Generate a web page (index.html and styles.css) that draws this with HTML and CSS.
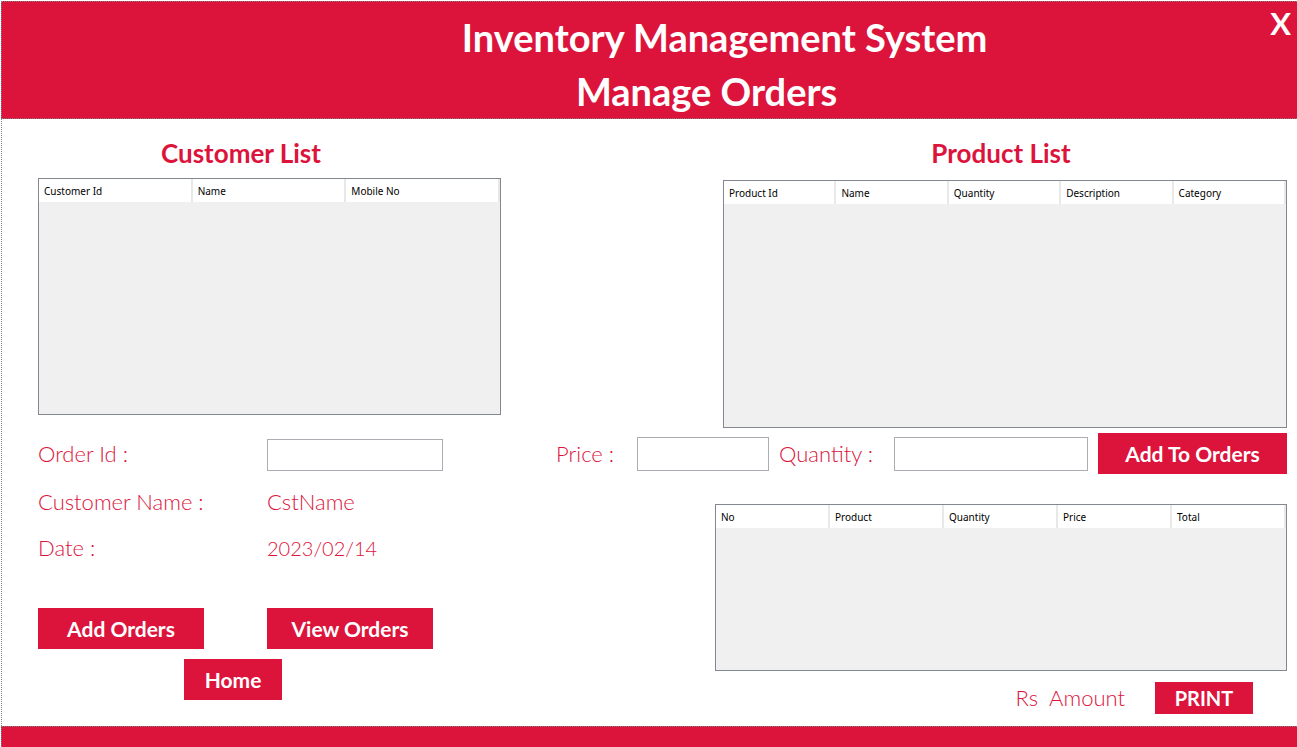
FILE: index.html
```html
<!DOCTYPE html>
<html lang="en">
<head>
<meta charset="utf-8">
<title>Manage Orders</title>
<link rel="stylesheet" href="styles.css">
</head>
<body>
<div class="window">
  <header class="banner">
    <div class="titles">
      <h1 class="title">Inventory Management System</h1>
      <p class="title subtitle">Manage Orders</p>
    </div>
    <button class="close" type="button">X</button>
  </header>
  <main class="content">
    <section class="customers">
      <h2 class="heading customer-heading">Customer List</h2>
      <div class="list customer-list">
        <table class="table">
          <thead><tr><th>Customer Id</th><th>Name</th><th>Mobile No</th></tr></thead>
        </table>
      </div>
      <form class="order-form">
        <label for="order-id">Order Id :</label>
        <input class="field" id="order-id" type="text">
        <span>Customer Name :</span>
        <span>CstName</span>
        <span>Date :</span>
        <span class="date">2023/02/14</span>
      </form>
      <div class="actions">
        <button class="button" type="button">Add Orders</button>
        <button class="button" type="button">View Orders</button>
      </div>
      <button class="button home" type="button">Home</button>
    </section>
    <section class="products">
      <h2 class="heading product-heading">Product List</h2>
      <div class="list product-list">
        <table class="table">
          <thead><tr><th>Product Id</th><th>Name</th><th>Quantity</th><th>Description</th><th>Category</th></tr></thead>
        </table>
      </div>
      <form class="add-form">
        <label class="price-label" for="price">Price :</label>
        <input class="field price" id="price" type="text">
        <label class="quantity-label" for="quantity">Quantity :</label>
        <input class="field quantity" id="quantity" type="text">
        <button class="button add" type="button">Add To Orders</button>
      </form>
      <div class="list order-list">
        <table class="table">
          <thead><tr><th>No</th><th>Product</th><th>Quantity</th><th>Price</th><th>Total</th></tr></thead>
        </table>
      </div>
      <div class="total">
        <span>Rs</span>
        <span>Amount</span>
        <button class="button print" type="button">PRINT</button>
      </div>
    </section>
  </main>
  <footer class="footer"></footer>
</div>
</body>
</html>
```
FILE: styles.css
```css
* {
  box-sizing: border-box;
}

body {
  margin: 0;
  background: #fff;
  color: #dc143c;
  font: 300 22px/30px "Century Gothic", Lato, sans-serif;
}

.window {
  display: flex;
  flex-direction: column;
  min-height: 100vh;
  padding: 1px 0 0 1px;
}

.banner {
  display: flex;
  background: #dc143c;
  border: 1px dotted #808080;
  border-right: 0;
  color: #fff;
  padding-top: 8px;
}

.titles {
  flex: 1;
  padding-left: 177px;
  text-align: center;
}

.title {
  margin: 0;
  font-size: 38px;
  font-weight: 700;
  line-height: 54px;
}

.subtitle {
  padding-right: 36px;
}

.close {
  align-self: flex-start;
  margin-top: -3px;
  padding: 0 6px 0 0;
  border: 0;
  background: none;
  color: #fff;
  font: 700 31px/32px "Century Gothic", Lato, sans-serif;
}

.content {
  flex: 1;
  display: grid;
  grid-template-columns: minmax(0, 463fr) minmax(0, 731fr);
  column-gap: 55px;
  padding: 19px 10px 12px 36px;
  border-left: 1px dotted #808080;
}

.heading {
  margin: 0;
  font-size: 26px;
  font-weight: 700;
  line-height: 30px;
  text-align: center;
}

.customer-heading {
  margin-bottom: 10px;
  padding-right: 57px;
}

.product-heading {
  margin-bottom: 12px;
  padding-left: 159px;
}

.list {
  border: 1px solid #828790;
  background: #f0f0f0;
}

.customer-list {
  height: 237px;
}

.product-list {
  height: 248px;
  margin-left: 167px;
}

.order-list {
  height: 167px;
  margin: 30px 0 0 159px;
}

.table {
  width: 100%;
  table-layout: fixed;
  border-collapse: separate;
  border-spacing: 0;
}

.table th {
  height: 23px;
  padding: 0 5px;
  border-right: 2px solid #e8e8e8;
  background: #fff;
  color: #000;
  font: 400 10px/20px Tahoma, "Noto Sans", sans-serif;
  text-align: left;
}

.order-form {
  display: grid;
  grid-template-columns: 229px 176px;
  row-gap: 16px;
  margin-top: 24px;
}

.date {
  font-size: 20px;
}

.field {
  height: 32px;
  min-width: 0;
  padding: 0 6px;
  border: 1px solid #abadb3;
  background: #fff;
  color: #000;
  font: inherit;
}

.button {
  height: 41px;
  padding: 0;
  border: 0;
  background: #dc143c;
  color: #fff;
  font: 700 21px/30px "Century Gothic", Lato, sans-serif;
}

.actions {
  display: grid;
  grid-template-columns: 166px 166px;
  column-gap: 63px;
  margin-top: 45px;
}

.home {
  display: block;
  width: 98px;
  margin: 10px 0 0 146px;
}

.add-form {
  display: flex;
  align-items: center;
  margin-top: 5px;
}

.add-form .field {
  height: 34px;
}

.price-label {
  width: 81px;
}

.price {
  flex: 2 2 132px;
}

.quantity-label {
  width: 125px;
  padding-left: 10px;
}

.quantity {
  flex: 3 3 194px;
}

.add {
  width: 189px;
  margin-left: 10px;
}

.total {
  display: flex;
  justify-content: flex-end;
  align-items: center;
  gap: 11px;
  margin-top: 11px;
  padding-right: 34px;
}

.print {
  width: 98px;
  height: 32px;
  margin-left: 19px;
  font-size: 20px;
}

.footer {
  height: 21px;
  border: 1px dotted #808080;
  border-width: 1px 0 0 1px;
  background: #dc143c;
}
```
